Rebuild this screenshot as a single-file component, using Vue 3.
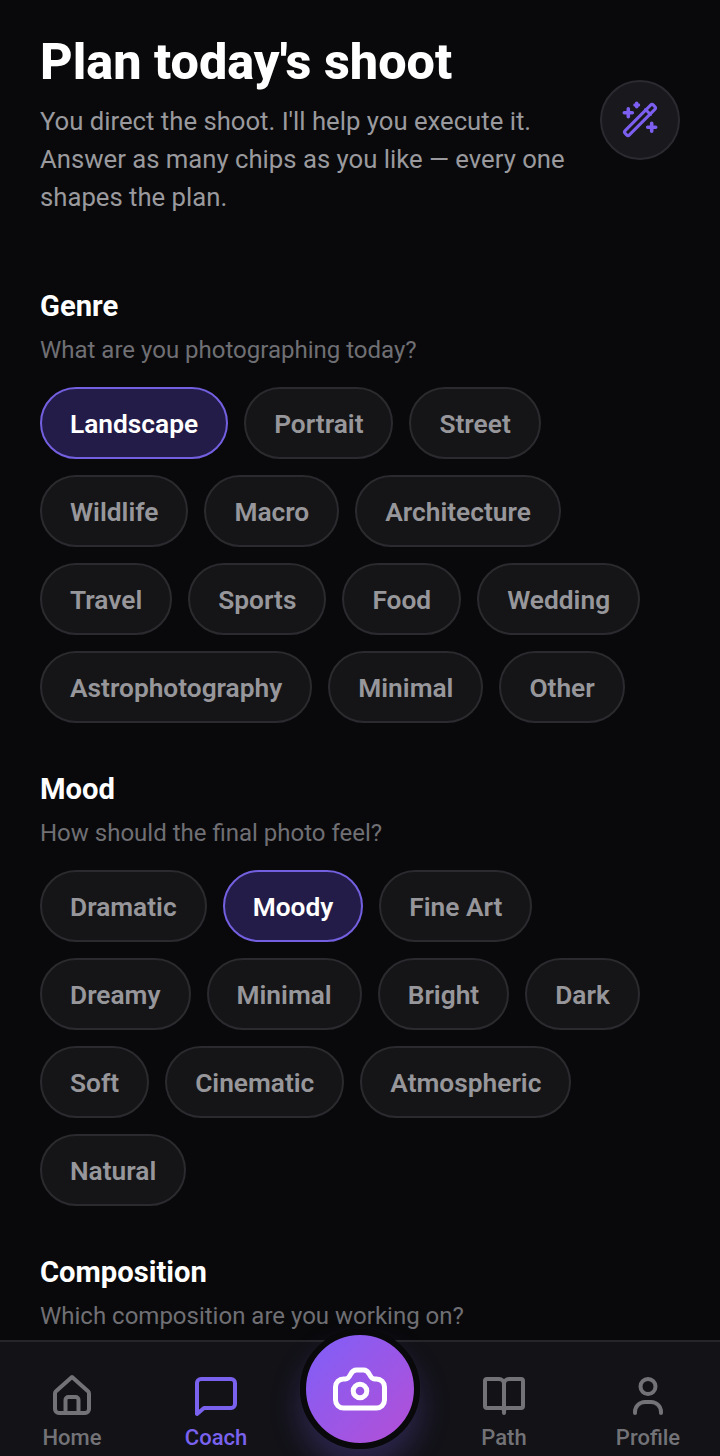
<template>
  <div class="screen">
    <main class="content">
      <header class="intro">
        <div class="intro-text">
          <h1>Plan today's shoot</h1>
          <p>You direct the shoot. I'll help you execute it. Answer as many chips as you like — every one shapes the plan.</p>
        </div>
        <button class="magic">
          <svg width="40" height="40" viewBox="0 0 40 40" fill="none" stroke="#7c5ff0" stroke-width="3" stroke-linecap="round" stroke-linejoin="round">
            <rect x="-3" y="-20" width="6" height="40" rx="2" transform="translate(20 20) rotate(45)" />
            <path d="M25.500 9.500l5 5" />
            <path d="M4.300 12.700h8M8.300 8.700v8M15 5h3.400M16.700 3.300v3.400M27.700 27.300h8M31.700 23.300v8" stroke-width="3.600" />
          </svg>
        </button>
      </header>

      <section v-for="group in groups" :key="group.title" class="group">
        <h2>{{ group.title }}</h2>
        <p class="hint">{{ group.hint }}</p>
        <div v-if="group.chips.length" class="chips">
          <span
            v-for="chip in group.chips"
            :key="chip"
            class="chip"
            :class="{ active: chip === group.active }"
          >{{ chip }}</span>
        </div>
      </section>
    </main>

    <nav class="tabbar">
      <a class="tab">
        <svg width="48" height="48" viewBox="0 0 48 48" fill="none" stroke="currentColor" stroke-width="4" stroke-linecap="round" stroke-linejoin="round">
          <path d="M7 21.500a3 3 0 0 1 1-2.300L24 5l16 14.200a3 3 0 0 1 1 2.300V37a4 4 0 0 1-4 4H11a4 4 0 0 1-4-4z" />
          <path d="M17.500 41V28a3 3 0 0 1 3-3h7a3 3 0 0 1 3 3v13" />
        </svg>
        <span>Home</span>
      </a>
      <a class="tab current">
        <svg width="48" height="48" viewBox="0 0 48 48" fill="none" stroke="currentColor" stroke-width="4" stroke-linecap="round" stroke-linejoin="round">
          <path d="M5 42V11a4 4 0 0 1 4-4h30a4 4 0 0 1 4 4v21a4 4 0 0 1-4 4H12z" />
        </svg>
        <span>Coach</span>
      </a>
      <div class="tab-gap"></div>
      <a class="tab">
        <svg width="48" height="48" viewBox="0 0 48 48" fill="none" stroke="currentColor" stroke-width="4" stroke-linecap="round" stroke-linejoin="round">
          <path d="M24 12a5 5 0 0 0-5-5H7a2 2 0 0 0-2 2v25a2 2 0 0 0 2 2h14a3 3 0 0 1 3 3 3 3 0 0 1 3-3h14a2 2 0 0 0 2-2V9a2 2 0 0 0-2-2H29a5 5 0 0 0-5 5z" />
          <path d="M24 12v29" />
        </svg>
        <span>Path</span>
      </a>
      <a class="tab">
        <svg width="48" height="48" viewBox="0 0 48 48" fill="none" stroke="currentColor" stroke-width="4" stroke-linecap="round" stroke-linejoin="round">
          <circle cx="24" cy="14.500" r="7.500" />
          <path d="M11 41v-1a10 10 0 0 1 10-10h6a10 10 0 0 1 10 10v1" />
        </svg>
        <span>Profile</span>
      </a>
      <button class="shutter">
        <svg width="60" height="60" viewBox="0 0 60 60" fill="none" stroke="#fff" stroke-width="5" stroke-linecap="round" stroke-linejoin="round">
          <path d="M13.500 20h2c2.500 0 3.500-1.500 5-4.500 1.500-3 3-4.500 6-4.500h7c3 0 4.500 1.500 6 4.500 1.500 3 2.500 4.500 5 4.500h2a8 8 0 0 1 8 8v13a8 8 0 0 1-8 8h-33a8 8 0 0 1-8-8V28a8 8 0 0 1 8-8z" />
          <circle cx="30" cy="32" r="6.800" />
        </svg>
      </button>
    </nav>
  </div>
</template>

<script setup>
const groups = [
  {
    title: 'Genre',
    hint: 'What are you photographing today?',
    active: 'Landscape',
    chips: ['Landscape', 'Portrait', 'Street', 'Wildlife', 'Macro', 'Architecture', 'Travel', 'Sports', 'Food', 'Wedding', 'Astrophotography', 'Minimal', 'Other']
  },
  {
    title: 'Mood',
    hint: 'How should the final photo feel?',
    active: 'Moody',
    chips: ['Dramatic', 'Moody', 'Fine Art', 'Dreamy', 'Minimal', 'Bright', 'Dark', 'Soft', 'Cinematic', 'Atmospheric', 'Natural']
  },
  {
    title: 'Composition',
    hint: 'Which composition are you working on?',
    chips: []
  }
]
</script>

<style>
html, body {
  background: #09090b;
}
</style>

<style scoped>
.screen {
  width: 720px;
  height: 1456px;
  display: flex;
  flex-direction: column;
  background: #09090b;
  font-family: Roboto, "Liberation Sans", sans-serif;
  overflow: hidden;
}

.content {
  flex: 1;
  min-height: 0;
  overflow: hidden;
  padding: 32px 40px 0;
}

.intro {
  display: flex;
  align-items: flex-start;
  gap: 20px;
  margin-bottom: 72px;
}

.intro-text {
  flex: 1;
}

h1 {
  margin: 0 0 10px;
  font-size: 50.4px;
  line-height: 60px;
  font-weight: 800;
  color: #fff;
}

.intro-text p {
  margin: 0;
  font-size: 25.7px;
  line-height: 38px;
  color: #9a9a9e;
}

.magic {
  flex-shrink: 0;
  width: 80px;
  height: 80px;
  margin-top: 48px;
  padding: 0;
  border-radius: 50%;
  border: 2px solid #2a2a30;
  background: #18181d;
  display: flex;
  align-items: center;
  justify-content: center;
}

.group {
  margin-bottom: 48px;
}

h2 {
  margin: 0 0 8px;
  font-size: 29.2px;
  line-height: 36px;
  font-weight: 700;
  color: #fff;
}

.hint {
  margin: 0 0 19px;
  font-size: 24px;
  line-height: 36px;
  color: #6f6f74;
}

.chips {
  display: flex;
  flex-wrap: wrap;
  gap: 16px;
}

.chip {
  height: 72px;
  box-sizing: border-box;
  padding: 2px 28px 0;
  display: flex;
  align-items: center;
  border: 2px solid #2b2b2f;
  border-radius: 36px;
  background: #151517;
  font-size: 26.3px;
  font-weight: 600;
  color: #97979b;
}

.chip.active {
  border-color: #7360e0;
  background: #231c48;
  color: #fff;
}

.tabbar {
  position: relative;
  flex-shrink: 0;
  height: 116px;
  box-sizing: border-box;
  display: flex;
  padding-top: 30px;
  border-top: 2px solid #26262a;
  background: #121217;
}

.tab {
  width: 144px;
  display: flex;
  flex-direction: column;
  align-items: center;
  color: #737377;
}

.tab span {
  font-size: 22px;
  line-height: 32px;
  font-weight: 500;
  margin-top: 2px;
}

.tab.current {
  color: #7a62ee;
}

.tab-gap {
  width: 144px;
}

.shutter {
  position: absolute;
  left: 300px;
  top: -13px;
  width: 120px;
  height: 120px;
  padding: 0;
  border: 6px solid #09090b;
  border-radius: 50%;
  background: linear-gradient(135deg, #7f5ff8, #b44fd6);
  box-shadow: 0 18px 30px rgba(124, 95, 240, 0.25);
  display: flex;
  align-items: center;
  justify-content: center;
}
</style>
